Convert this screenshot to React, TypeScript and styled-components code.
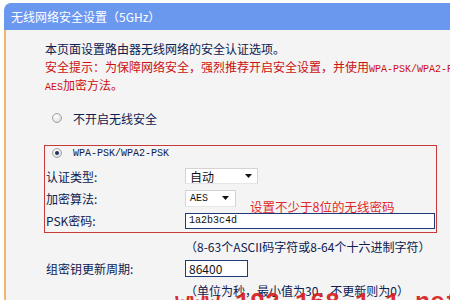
import React from 'react';
import styled, { createGlobalStyle } from 'styled-components';

const GlobalStyle = createGlobalStyle`
  html, body { margin: 0; padding: 0; background: #ffffff; }
  body {
    font-family: "Noto Sans CJK SC", "Liberation Sans", sans-serif;
    font-size: 12px;
  }
`;

const Page = styled.div`
  position: relative;
  width: 450px;
  height: 300px;
  overflow: hidden;
  box-sizing: border-box;
  padding: 3px 0 0 4px;
`;

const Header = styled.div`
  height: 27px;
  background: #6b98ef;
  border-top-left-radius: 7px;
  color: #ffffff;
  font-size: 12px;
  line-height: 27px;
  padding-left: 7px;
  white-space: nowrap;
`;

const Panel = styled.div`
  border-left: 2px solid #f2b46e;
  background: #f4f4f4;
  padding: 10px 0 0 38px;
  height: 280px;
  overflow: hidden;
`;

const Intro = styled.div`
  padding-left: 1px;
`;

const Line = styled.div<{ $red?: boolean }>`
  height: 18px;
  line-height: 18px;
  white-space: nowrap;
  color: ${(p) => (p.$red ? '#cc1010' : '#0d2050')};
`;

const Mono = styled.span<{ $size?: number }>`
  font-family: "Liberation Mono", monospace;
  font-size: ${(p) => p.$size ?? 10}px;
`;

const RadioRow = styled.div<{ $h: number; $mt?: number; $pl: number }>`
  display: flex;
  align-items: center;
  gap: 11px;
  height: ${(p) => p.$h}px;
  margin-top: ${(p) => p.$mt ?? 0}px;
  padding-left: ${(p) => p.$pl}px;
  color: #0d2050;
  white-space: nowrap;
`;

const Radio = styled.span<{ $checked?: boolean }>`
  position: relative;
  width: 10px;
  height: 10px;
  box-sizing: border-box;
  border-radius: 50%;
  border: 1px solid #a3a3a3;
  background: radial-gradient(circle at 40% 35%, #ffffff 0%, #e6e6e6 60%, #cfcfcf 100%);
  flex: none;
  &::after {
    content: '';
    display: ${(p) => (p.$checked ? 'block' : 'none')};
    position: absolute;
    left: 2px;
    top: 2px;
    width: 4px;
    height: 4px;
    border-radius: 50%;
    background: #1d3466;
  }
`;

const Box = styled.div`
  position: relative;
  margin-top: 17px;
  width: 393px;
  box-sizing: border-box;
  border: 1px solid #c73a3a;
`;

const FieldRow = styled.div<{ $h: number; $mt?: number; $pl: number }>`
  display: flex;
  align-items: center;
  height: ${(p) => p.$h}px;
  margin-top: ${(p) => p.$mt ?? 0}px;
  padding-left: ${(p) => p.$pl}px;
`;

const Label = styled.div`
  width: 139px;
  flex: none;
  color: #0d2050;
  white-space: nowrap;
`;

const Select = styled.div<{ $w: number; $h: number; $pr: number }>`
  width: ${(p) => p.$w}px;
  height: ${(p) => p.$h}px;
  box-sizing: border-box;
  background: #ffffff;
  border: 1px solid #d3d3d3;
  border-bottom-color: #e6e6e6;
  display: flex;
  align-items: center;
  justify-content: space-between;
  padding: 0 ${(p) => p.$pr}px 0 4px;
  color: #111111;
`;

const Arrow = () => (
  <svg width="7" height="4" viewBox="0 0 7 4">
    <path d="M0 0 H7 L3.5 4 Z" fill="#111" />
  </svg>
);

const TextInput = styled.div<{ $w: number; $h: number }>`
  width: ${(p) => p.$w}px;
  height: ${(p) => p.$h}px;
  box-sizing: border-box;
  background: #ffffff;
  border: 1px solid #1f3b77;
  display: flex;
  align-items: center;
  padding-left: 3px;
  color: #111111;
`;

const Hint = styled.div<{ $h: number; $mt?: number }>`
  height: ${(p) => p.$h}px;
  margin-top: ${(p) => p.$mt ?? 0}px;
  padding-left: 141px;
  display: flex;
  align-items: center;
  color: #0d2050;
  white-space: nowrap;
`;

const Note = styled.div`
  position: absolute;
  left: 205px;
  top: 52px;
  font-size: 12.5px;
  line-height: 18px;
  color: #e02a2a;
  white-space: nowrap;
`;

const Watermark = styled.div`
  position: absolute;
  left: 175px;
  top: 291px;
  font-family: "Liberation Mono", monospace;
  font-size: 25px;
  line-height: 25px;
  font-weight: bold;
  color: #d81e1e;
  white-space: nowrap;
  opacity: 0.92;
`;

export default function App() {
  return (
    <Page>
      <GlobalStyle />
      <Header>无线网络安全设置（5GHz）</Header>
      <Panel>
        <Intro>
          <Line>本页面设置路由器无线网络的安全认证选项。</Line>
          <Line $red>
            安全提示：为保障网络安全，强烈推荐开启安全设置，并使用<Mono>WPA-PSK/WPA2-PSK</Mono>
          </Line>
          <Line $red>
            <Mono>AES</Mono>加密方法。
          </Line>
        </Intro>
        <RadioRow $h={20} $mt={14} $pl={8}>
          <Radio />
          不开启无线安全
        </RadioRow>
        <Box>
          <RadioRow $h={14} $pl={7}>
            <Radio $checked />
            <Mono>WPA-PSK/WPA2-PSK</Mono>
          </RadioRow>
          <FieldRow $h={22} $mt={5} $pl={1}>
            <Label>认证类型:</Label>
            <Select $w={73} $h={16} $pr={5}>
              <span>自动</span>
              <Arrow />
            </Select>
          </FieldRow>
          <FieldRow $h={22} $pl={1}>
            <Label>加密算法:</Label>
            <Select $w={51} $h={17} $pr={6}>
              <Mono>AES</Mono>
              <Arrow />
            </Select>
          </FieldRow>
          <FieldRow $h={23} $pl={1}>
            <Label>PSK密码:</Label>
            <TextInput $w={250} $h={16}>
              <Mono>1a2b3c4d</Mono>
            </TextInput>
          </FieldRow>
          <Note>设置不少于8位的无线密码</Note>
        </Box>
        <Hint $h={26}>（8-63个ASCII码字符或8-64个十六进制字符）</Hint>
        <FieldRow $h={19} $pl={2}>
          <Label>组密钥更新周期:</Label>
          <TextInput $w={63} $h={17}>86400</TextInput>
        </FieldRow>
        <Hint $h={18} $mt={3}>（单位为秒，最小值为30，不更新则为0）</Hint>
      </Panel>
      <Watermark>www.192.168.1.1.net</Watermark>
    </Page>
  );
}
